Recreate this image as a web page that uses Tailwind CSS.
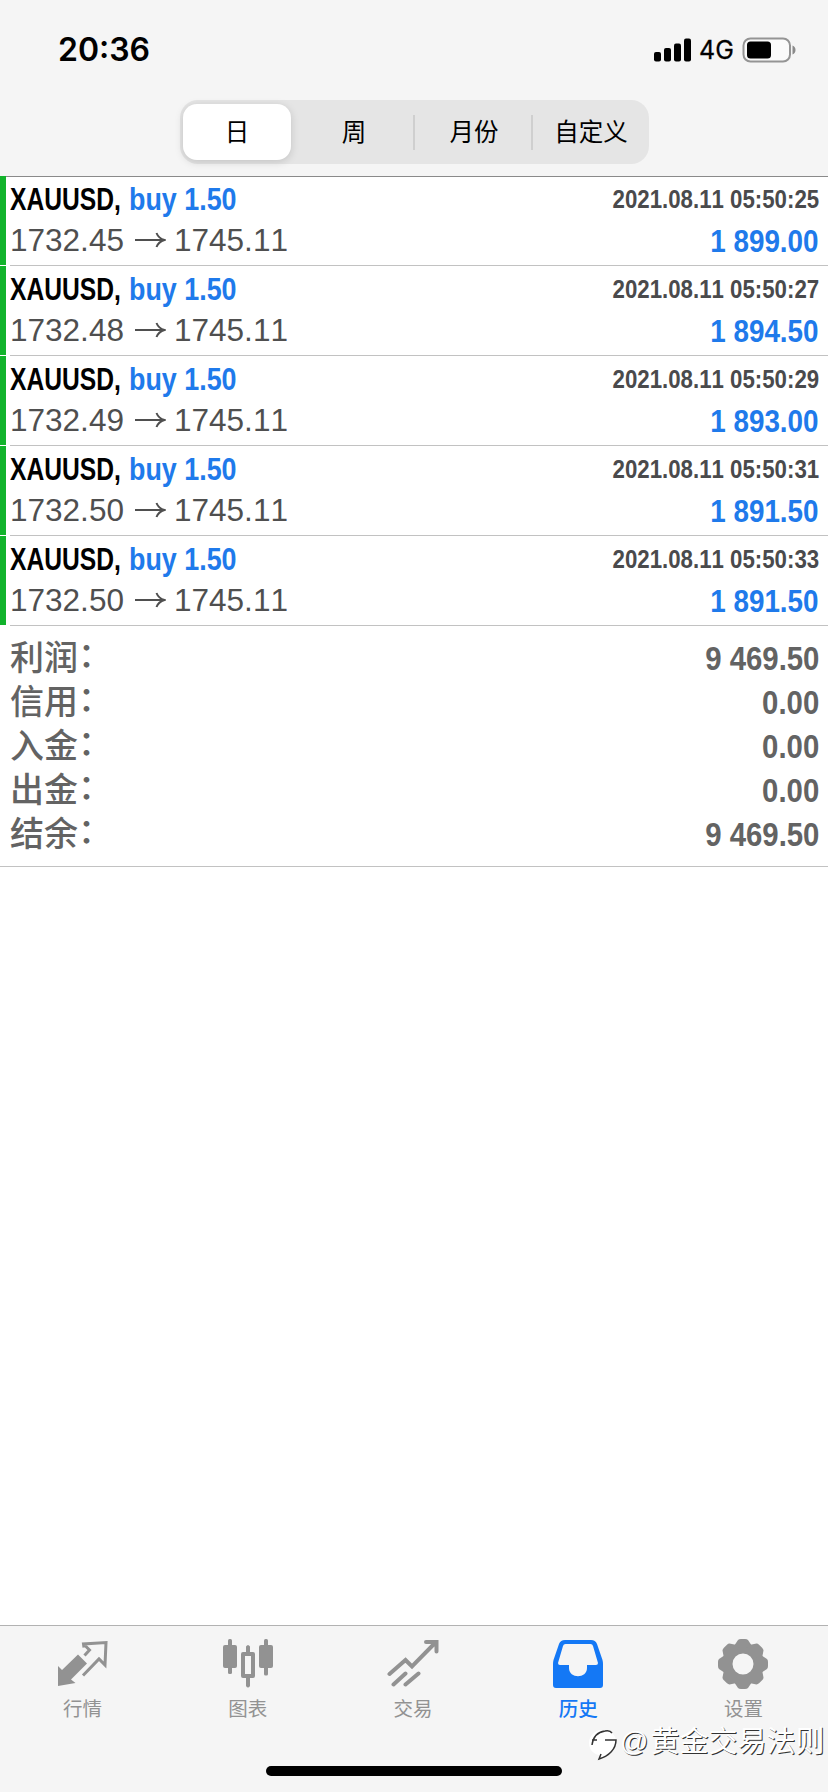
<!DOCTYPE html>
<html lang="zh-CN">
<head>
<meta charset="utf-8">
<title>历史</title>
<script src="https://cdn.jsdelivr.net/npm/@tailwindcss/browser@4"></script>
</head>
<body class="bg-white">
<div class="relative flex h-[1792px] w-[828px] flex-col overflow-hidden bg-white font-['Liberation_Sans','Noto_Sans_CJK_SC',sans-serif] [font-kerning:none]">

  <header class="flex h-[177px] shrink-0 flex-col border-b border-[#8a8a8a] bg-[#f5f5f5]">
    <div class="flex h-[100px] items-center justify-between pr-[33px] pl-[58px]">
      <span class="font-['Inter',sans-serif] text-[32px] leading-10 font-semibold text-black">20:36</span>
      <div class="flex items-center">
        <svg class="h-[24px] w-[38px]" viewBox="0 0 38 24"><rect x="0" y="14" width="7" height="9.500" rx="2"/><rect x="10" y="10" width="7" height="13.500" rx="2"/><rect x="20" y="5.500" width="7" height="18" rx="2"/><rect x="30" y="0.500" width="7" height="23" rx="2"/></svg>
        <span class="ml-[7px] w-[36px] font-['Inter',sans-serif] text-[25px] leading-8 font-normal [-webkit-text-stroke:0.3px_black]">4G</span>
        <svg class="-mr-[2px] ml-[7px] h-[26px] w-[55px]" viewBox="0 0 55 26"><rect x="1.500" y="1.500" width="46.500" height="23" rx="7" fill="#fafafa" stroke="#949494" stroke-width="2"/><rect x="5" y="4.500" width="24" height="17" rx="3.500"/><path d="M50.500 8.500c4 1.500 4 7.500 0 9z" fill="#8a8a8a"/></svg>
      </div>
    </div>
    <nav class="ml-[180px] flex h-[64px] w-[469px] items-center rounded-[18px] bg-[#e5e5e5] p-[3px] pr-0 text-[24.500px] leading-8 text-black">
      <div class="flex h-[56px] w-[108px] shrink-0 items-center justify-center rounded-[14px] bg-white pt-px shadow-[0_2px_8px_rgba(0,0,0,0.15)]">日</div>
      <div class="flex w-[122px] shrink-0 justify-center pt-px pl-[4px]">周</div>
      <div class="h-[35px] w-[2px] shrink-0 bg-[#cfcfcf]"></div>
      <div class="flex w-[116px] shrink-0 justify-center pt-px pl-[2px]">月份</div>
      <div class="h-[35px] w-[2px] shrink-0 bg-[#cfcfcf]"></div>
      <div class="flex w-[116px] shrink-0 justify-center pt-px whitespace-nowrap">自定义</div>
    </nav>
  </header>

  <main class="-mt-px flex flex-1 flex-col">
    <section id="deals"></section>
    <section class="flex h-[241px] flex-col border-b border-[#c2c2c2] pt-[11px] pr-[9px] pl-[10px] text-[33px] leading-[44px] font-bold text-[#636363]">
      <div class="flex justify-between"><span class="-translate-y-px text-[34px] font-medium">利润<span class="relative -top-[3px]">：</span></span><span class="origin-right scale-x-[0.89]">9 469.50</span></div>
      <div class="flex justify-between"><span class="-translate-y-px text-[34px] font-medium">信用<span class="relative -top-[3px]">：</span></span><span class="origin-right scale-x-[0.89]">0.00</span></div>
      <div class="flex justify-between"><span class="-translate-y-px text-[34px] font-medium">入金<span class="relative -top-[3px]">：</span></span><span class="origin-right scale-x-[0.89]">0.00</span></div>
      <div class="flex justify-between"><span class="-translate-y-px text-[34px] font-medium">出金<span class="relative -top-[3px]">：</span></span><span class="origin-right scale-x-[0.89]">0.00</span></div>
      <div class="flex justify-between"><span class="-translate-y-px text-[34px] font-medium">结余<span class="relative -top-[3px]">：</span></span><span class="origin-right scale-x-[0.89]">9 469.50</span></div>
    </section>
  </main>

  <footer class="flex h-[167px] shrink-0 flex-col items-center border-t border-[#b2b2b2] bg-[#f5f5f5]">
    <nav class="flex h-[140px] w-full pr-[2px] text-[19.5px] leading-6 text-[#929292]">
      <div class="flex flex-1 flex-col items-center gap-[7px] pt-[12px]">
        <svg class="h-[52px] w-[52px]" viewBox="0 0 52 52" fill="none"><path d="M1 28 5 32 21 16.500 30 25.500 14 41.500 18.500 45 1 48z" fill="#929292"/><path d="M27 9.500 26.500 6 49 4.500 48 27 42 21 26 37.500M26.500 6 32.500 12 27.500 17.500" stroke="#929292" stroke-width="3"/></svg>
        <span>行情</span>
      </div>
      <div class="flex flex-1 flex-col items-center gap-[7px] pt-[12px]">
        <svg class="h-[52px] w-[52px]" viewBox="0 0 52 52" fill="#929292"><rect x="1" y="7" width="14" height="23" rx="2"/><rect x="6" y="1" width="4" height="35" rx="1.500"/><rect x="37" y="7" width="14" height="23" rx="2"/><rect x="42" y="1" width="4" height="36.500" rx="1.500"/><path d="M24 8.500q2-3 4 0V14h3q2 0 2 2v22q0 2-2 2h-3v8q-2 3-4 0v-8h-3q-2 0-2-2V16q0-2 2-2h3zM23 18v18h6V18z" fill-rule="evenodd"/></svg>
        <span>图表</span>
      </div>
      <div class="flex flex-1 flex-col items-center gap-[7px] pt-[12px]">
        <svg class="h-[52px] w-[52px]" viewBox="0 0 52 52" fill="none" stroke="#929292" stroke-width="4" stroke-linecap="round"><path d="M2.500 36 18.500 22 25 28.500 48 5M39 4h10.500v9.500M6.500 46.500 18.500 35.500M18.500 46.500 31.500 35.500"/></svg>
        <span>交易</span>
      </div>
      <div class="flex flex-1 flex-col items-center gap-[7px] pt-[12px] text-[#1478f5]">
        <svg class="h-[52px] w-[52px]" viewBox="0 0 52 52"><path fill="#1478f5" fill-rule="evenodd" d="M13 2H39Q43.500 2 45 6L50.500 22Q51 24 51 26V47Q51 50 48 50H4Q1 50 1 47V26Q1 24 1.500 22L7 6Q8.500 2 13 2zM13.500 6Q11.500 6 11 8L6 25Q6 27 8 27H17V30C17 41 35 41 35 30V27H44Q46 27 46 25L41 8Q40.500 6 38.500 6z"/></svg>
        <span class="font-medium">历史</span>
      </div>
      <div class="flex flex-1 flex-col items-center gap-[7px] pt-[12px]">
        <svg class="h-[52px] w-[52px]" viewBox="-26 -26 52 52" fill="#929292"><circle r="15.500" fill="none" stroke="#929292" stroke-width="10"/><g id="tooth"><path d="M-9-18-5-24Q-4-25-2-25H2Q4-25 5-24L9-18V-14H-9zM-9 18-5 24Q-4 25-2 25H2Q4 25 5 24L9 18V14H-9z"/></g><use href="#tooth" transform="rotate(45)"/><use href="#tooth" transform="rotate(90)"/><use href="#tooth" transform="rotate(135)"/></svg>
        <span>设置</span>
      </div>
    </nav>
    <div class="h-[10px] w-[296px] rounded-full bg-black"></div>
  </footer>

  <div class="absolute top-[1722px] left-[588px] flex h-10 items-center whitespace-nowrap text-white [text-shadow:1px_1px_0px_#333]">
    <svg class="h-[36px] w-[32px] overflow-visible" viewBox="0 0 32 36" fill="none"><path d="M14 6C22 6 28 11 28 17C28 26 20 33 11 34L11 31C5 30 1 25 1 19C1 12 7 6 14 6z" fill="#fff"/><path d="M4 21C5 13 10 8 17 7Q22 6 24 9M4 16H9M17 16H28C28 25 21 32 11 35L13 30" stroke="#333" stroke-width="1.500"/></svg>
    <span class="text-[28px] leading-10">@</span><span class="ml-[2px] text-[29px] leading-10">黄金交易法则</span>
  </div>
</div>

<template id="deal">
  <article class="flex h-[90px]">
    <div class="h-[89px] w-[6px] bg-[#12b32c]"></div>
    <div class="ml-[4px] flex flex-1 justify-between border-b border-[#c2c2c2] pt-[3px] pr-[9px]">
      <div class="text-[32px] leading-10">
        <div class="flex font-bold"><span class="w-[119px] origin-left scale-x-[0.77] text-black">XAUUSD,</span><span class="origin-left scale-x-[0.84] whitespace-nowrap text-[#1f7aeb]">buy 1.50</span></div>
        <div class="mt-px flex items-center text-[#4f4f4f]"><span class="w-[116px] origin-left scale-x-[0.985]" data-f="open"></span><svg class="mx-[8px] h-[18px] w-[32px]" viewBox="0 0 32 18" fill="none" stroke="#4f4f4f" stroke-width="2"><path d="M1 9H30M22.500 2C24 6 27 8 30.500 9 27 10 24 12 22.500 16"/></svg><span class="origin-left scale-x-[0.985]">1745.11</span></div>
      </div>
      <div class="flex flex-col items-end font-bold">
        <span class="origin-right scale-x-[0.89] text-[25px] leading-10 whitespace-nowrap text-[#4a4a4c]" data-f="time"></span>
        <span class="mt-[2px] origin-right scale-x-[0.87] text-[32px] leading-10 whitespace-nowrap text-[#1f7aeb]" data-f="profit"></span>
      </div>
    </div>
  </article>
</template>
<script>
const deals = [
  ["1732.45", "2021.08.11 05:50:25", "1 899.00"],
  ["1732.48", "2021.08.11 05:50:27", "1 894.50"],
  ["1732.49", "2021.08.11 05:50:29", "1 893.00"],
  ["1732.50", "2021.08.11 05:50:31", "1 891.50"],
  ["1732.50", "2021.08.11 05:50:33", "1 891.50"]
];
const list = document.getElementById("deals");
for (const [open, time, profit] of deals) {
  const row = document.getElementById("deal").content.cloneNode(true);
  row.querySelector("[data-f=open]").textContent = open;
  row.querySelector("[data-f=time]").textContent = time;
  row.querySelector("[data-f=profit]").textContent = profit;
  list.append(row);
}
</script>
</body>
</html>
